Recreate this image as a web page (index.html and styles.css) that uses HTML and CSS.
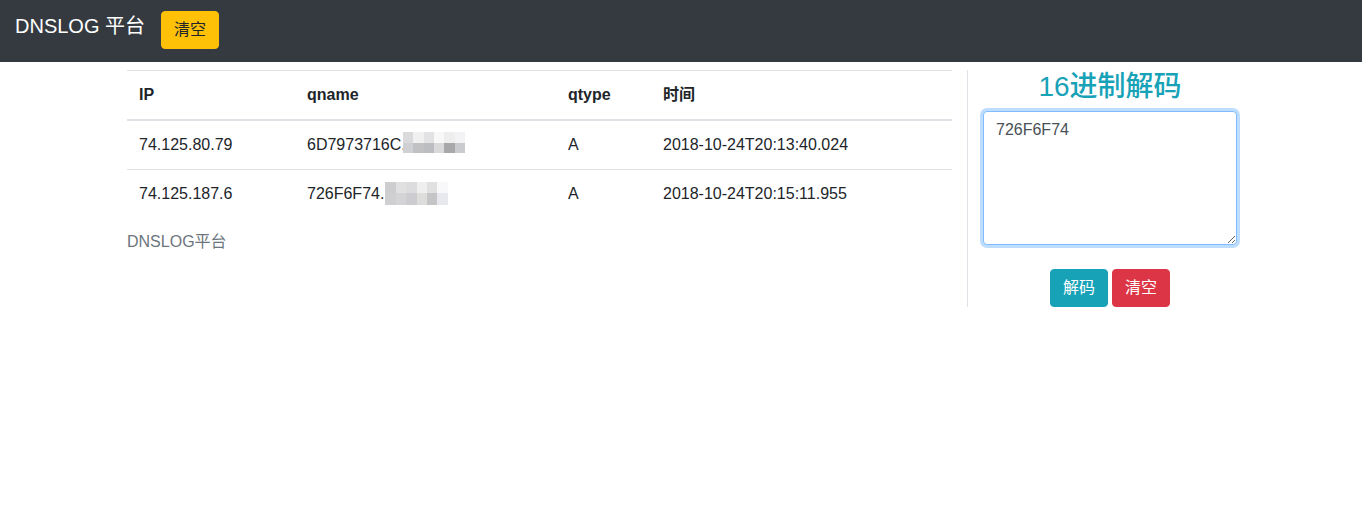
FILE: index.html
```html
<!DOCTYPE html>
<html lang="zh-CN">
<head>
<meta charset="utf-8">
<title>DNSLOG 平台</title>
<link rel="stylesheet" href="styles.css">
</head>
<body>
<nav class="navbar">
  <span class="brand">DNSLOG 平台</span>
  <button class="btn btn-warning">清空</button>
</nav>
<div class="main">
  <div class="col-left">
    <table class="table">
      <colgroup>
        <col class="c-ip">
        <col class="c-qname">
        <col class="c-qtype">
        <col>
      </colgroup>
      <thead>
        <tr>
          <th>IP</th>
          <th>qname</th>
          <th>qtype</th>
          <th>时间</th>
        </tr>
      </thead>
      <tbody>
        <tr>
          <td>74.125.80.79</td>
          <td>6D7973716C.<span class="mosaic m1"><i style="background:#dadadc"></i><i style="background:#f0f0f1"></i><i style="background:#e2e2e5"></i><i style="background:#f8f8f8"></i><i style="background:#eeeeef"></i><i style="background:#f3f3f5"></i><i style="background:#cfd0d3"></i><i style="background:#c1c1c3"></i><i style="background:#bcbdc0"></i><i style="background:#d9d9d9"></i><i style="background:#a8a8ab"></i><i style="background:#cacbce"></i></span></td>
          <td>A</td>
          <td>2018-10-24T20:13:40.024</td>
        </tr>
        <tr>
          <td>74.125.187.6</td>
          <td>726F6F74.<span class="mosaic m2"><i style="background:#cdcdd0"></i><i style="background:#e0e0e1"></i><i style="background:#dcdcdf"></i><i style="background:#efefef"></i><i style="background:#e0e0e0"></i><i style="background:#f8f8fa"></i><i style="background:#cfcfd2"></i><i style="background:#d4d4d6"></i><i style="background:#cdcdd1"></i><i style="background:#dddddb"></i><i style="background:#c5c5c7"></i><i style="background:#e8e9ee"></i></span></td>
          <td>A</td>
          <td>2018-10-24T20:15:11.955</td>
        </tr>
      </tbody>
    </table>
    <p class="text-muted">DNSLOG平台</p>
  </div>
  <div class="col-right">
    <h3 class="title">16进制解码</h3>
    <textarea class="form-control" rows="5">726F6F74</textarea>
    <div class="actions">
      <button class="btn btn-info">解码</button>
      <button class="btn btn-danger">清空</button>
    </div>
  </div>
</div>
</body>
</html>
```
FILE: styles.css
```css
* { box-sizing: border-box; }
html, body { margin: 0; padding: 0; }
body {
  font-family: "Liberation Sans", Arial, "Noto Sans CJK SC", sans-serif;
  font-size: 16px;
  line-height: 1.5;
  color: #212529;
  background: #fff;
}
.navbar {
  height: 62px;
  background: #343a40;
  display: flex;
  align-items: flex-start;
  padding: 11px 15px 13px;
}
.brand {
  color: #fff;
  font-size: 20px;
  line-height: 30px;
  margin-right: 16px;
}
.btn {
  font-family: inherit;
  font-size: 16px;
  line-height: 24px;
  padding: 6px 12px;
  border: 1px solid transparent;
  border-radius: 4px;
  cursor: pointer;
}
.btn-warning { background: #ffc107; border-color: #ffc107; color: #212529; }
.btn-info { background: #17a2b8; border-color: #17a2b8; color: #fff; }
.btn-danger { background: #dc3545; border-color: #dc3545; color: #fff; }

.main {
  width: 1140px;
  margin: 8px auto 0;
  display: flex;
  align-items: flex-start;
  position: relative;
  left: 1px;
}
.col-left { width: 855px; padding: 0 15px; }
.col-right {
  width: 285px;
  padding: 0 15px;
  border-left: 1px solid #dee2e6;
  text-align: center;
}
.table {
  width: 100%;
  table-layout: fixed;
  border-collapse: collapse;
  margin-bottom: 12px;
}
.table th, .table td {
  padding: 12px;
  text-align: left;
  vertical-align: top;
  border-top: 1px solid #dee2e6;
  white-space: nowrap;
  line-height: 24px;
}
.table thead th {
  border-bottom: 2px solid #dee2e6;
  font-weight: bold;
}
.c-ip { width: 168px; }
.c-qname { width: 261px; }
.c-qtype { width: 95px; }
.mosaic {
  display: inline-grid;
  grid-template-columns: repeat(6, 10.4px);
  width: 62px;
  vertical-align: top;
}
.mosaic i { display: block; }
.m1 { margin-left: -3px; margin-top: -1px; grid-template-rows: 11px 10px; height: 21px; }
.m2 { margin-left: 1px; grid-template-rows: 11px 12px; height: 23px; }
.text-muted { color: #6c757d; margin: 0; }
.title {
  color: #17a2b8;
  font-size: 28px;
  font-weight: 500;
  line-height: 1.2;
  margin: 0 0 7px;
}
.form-control {
  display: block;
  width: 100%;
  height: 134px;
  font-family: inherit;
  font-size: 16px;
  line-height: 24px;
  color: #495057;
  padding: 6px 12px;
  border: 1px solid #80bdff;
  border-radius: 4px;
  box-shadow: 0 0 0 3px rgba(0, 123, 255, 0.25);
  outline: none;
  resize: vertical;
}
.actions {
  margin-top: 24px;
  display: flex;
  justify-content: center;
  gap: 4px;
}
```
